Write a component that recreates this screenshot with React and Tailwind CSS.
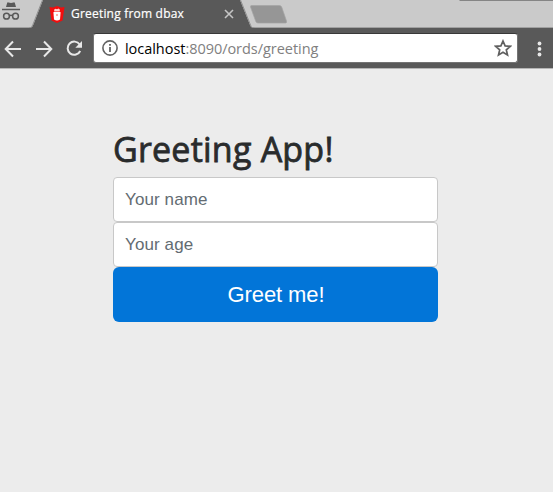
function TabStrip() {
  return (
    <div className="relative flex h-[28px] bg-[#cacaca]">
      <svg className="absolute inset-0" width="553" height="28" viewBox="0 0 553 28">
        <path d="M0 27.5H553" stroke="#a0a0a0" />
        <path d="M30 28C32.5 28 33 25 34 23L43 0H240L250 25C251 27.500 252 28 254 28Z" fill="#595959" />
        <path d="M29 28C32 28 32.500 25 33.500 23L42.500 0M240.500 0L250.500 25C251.500 27.500 252.500 28 254.500 28" fill="none" stroke="#909090" />
        <path d="M251.500 5.500H279.500Q281 5.500 281.700 7L286.500 21Q287 23 285.500 23H258Q256.500 23 255.800 21.500L250.500 7Q250.300 5.500 251.500 5.500Z" fill="#969696" stroke="#a5a5a5" strokeWidth=".7" />
        <path d="M459 0H553V1H460Z" fill="#858585" />
      </svg>
      <div className="relative flex w-[49px] pl-[2px] pt-[2px]">
        <svg width="18" height="19" viewBox="0 0 18 19">
          <path d="M4 5L5.200 .7Q5.600 0 6.500 .4L9 1L11.500 .4Q12.400 0 12.800 .7L14 5Z" fill="#595959" />
          <path d="M0 7.500H18" stroke="#595959" strokeWidth="1.500" />
          <g fill="none" stroke="#595959" strokeWidth="1.500">
            <circle cx="4.500" cy="14.200" r="2.900" />
            <circle cx="13.500" cy="14.200" r="2.900" />
            <path d="M7.500 13.600Q9 12.700 10.500 13.600" />
          </g>
        </svg>
      </div>
      <div className="relative flex w-[188px] items-center">
        <svg width="16" height="17" viewBox="0 0 16 17">
          <path d="M.5 1L4 1.500L8 0L12 1.500L15.500 1L13.500 14.500L8 17L2.500 14.500Z" fill="#f20d0d" />
          <path d="M5.200 3.500L6.500 2.700L8 3.300L9.500 2.500L10.800 3.600V5.500H5.200Z" fill="#ffd2cf" />
          <path d="M4.500 6H11.500V7.500L11 13.500Q8 15.400 5 13.500L4.500 7.500Z" fill="#fff" />
          <path d="M7 8H9V10H7Z" fill="#ffb0ac" />
        </svg>
        <span className="ml-[6px] whitespace-nowrap font-['Open_Sans','Noto_Sans',sans-serif] text-[12px] leading-[16px] tracking-[0.2px] text-white [-webkit-text-stroke:0.2px_white]">Greeting from dbax</span>
        <svg className="ml-auto mr-[3px]" width="10" height="10" viewBox="0 0 10 10">
          <path d="M1 1L9 9M9 1L1 9" stroke="#c5c5c5" strokeWidth="1.600" />
        </svg>
      </div>
    </div>
  );
}

function Toolbar() {
  return (
    <div className="flex h-[41px] items-start border-b border-[#b5b5b5] bg-[#595959] pt-[5px]">
      <div className="flex h-[30px] w-[93px] items-center">
        <svg width="93" height="30" viewBox="0 0 93 30" fill="none" stroke="#e8e8e8" strokeWidth="2">
          <path d="M13 8.500L5.700 16L13 23.500M6 16H21" />
          <path d="M44 8.500L51.300 16L44 23.500M51 16H36" />
          <path d="M79.700 11.500A6.600 6.600 0 1 0 80.200 18" />
          <path d="M82 8V14.700H75.300Z" fill="#e8e8e8" stroke="none" />
        </svg>
      </div>
      <div className="flex h-[30px] w-[425px] items-center rounded-[3px] border border-t-[#383838] border-x-[#747474] border-b-[#747474] bg-white pl-[8px] pr-[5px]">
        <svg width="16" height="16" viewBox="0 0 16 16" fill="none" stroke="#626262">
          <circle cx="8" cy="8" r="7.100" strokeWidth="1.600" />
          <path d="M8 7V12M8 4V5.800" strokeWidth="1.800" />
        </svg>
        <div className="ml-[7px] mt-px whitespace-nowrap font-['Open_Sans','Noto_Sans',sans-serif] text-[14.5px] leading-[20px] tracking-[-0.04px] text-[#808080]">
          <span className="text-black">localhost</span>:8090/ords/greeting
        </div>
        <svg className="ml-auto" width="18" height="18" viewBox="0 0 18 18">
          <path d="M9 2L11.100 6.900L16.300 7.300L12.300 10.800L13.500 16L9 13.200L4.500 16L5.700 10.800L1.700 7.300L6.900 6.900Z" fill="none" stroke="#606060" strokeWidth="1.700" />
        </svg>
      </div>
      <svg className="ml-[19px]" width="6" height="30" viewBox="0 0 6 30" fill="#e8e8e8">
        <circle cx="2.500" cy="10.500" r="1.900" />
        <circle cx="2.500" cy="16" r="1.900" />
        <circle cx="2.500" cy="21.500" r="1.900" />
      </svg>
    </div>
  );
}

function Field({ placeholder }) {
  return (
    <input
      placeholder={placeholder}
      className="block h-[45px] w-full rounded-[4px] border border-[#c8c8c8] bg-white px-[11px] text-[17px] tracking-[0.1px] text-black placeholder:text-[#636c72]"
    />
  );
}

export default function App() {
  return (
    <div className="flex h-[492px] w-[553px] flex-col overflow-hidden bg-[#ececec]">
      <TabStrip />
      <Toolbar />
      <form className="ml-[113px] mt-[60px] w-[325px] font-['Liberation_Sans',Arial,sans-serif]">
        <h1 className="mb-[7px] mt-[-1px] whitespace-nowrap font-['Open_Sans','Noto_Sans',sans-serif] text-[34px] font-medium leading-[42px] tracking-[0.22px] text-[#292b2c] [-webkit-text-stroke:0.8px_#292b2c]">Greeting App!</h1>
        <Field placeholder="Your name" />
        <Field placeholder="Your age" />
        <button type="button" className="block h-[55px] w-full rounded-[6px] bg-[#0275d8] pl-[1px] text-[22px] leading-[30px] tracking-[-0.1px] text-white">Greet me!</button>
      </form>
    </div>
  );
}
